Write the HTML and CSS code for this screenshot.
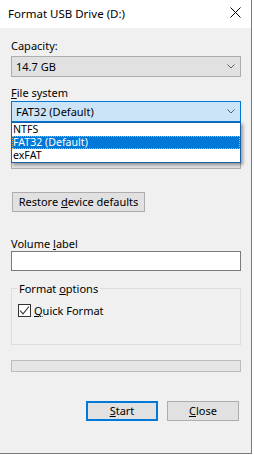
FILE: index.html
```html
<!DOCTYPE HTML>
<html>
<head>
<meta charset="utf-8">
<title>Format USB Drive (D:)</title>
<link rel="stylesheet" href="styles.css">
</head>

<body>
<div class="window">
	<div class="titlebar">
		<span class="title">Format USB Drive (D:)</span>
		<svg class="close-x" width="11" height="11" viewBox="0 0 11 11"><path d="M0.5 0.5L10.5 10.5M10.5 0.5L0.5 10.5" stroke="#000" stroke-width="1" fill="none"/></svg>
	</div>
	<div class="content">
		<div class="label lb-capacity">Capacity:</div>
		<div class="combo combo-capacity">
			<span>14.7 GB</span>
			<svg class="chev" width="8" height="5" viewBox="0 0 8 5"><path d="M0.5 0.5L4 4L7.5 0.5" stroke="#606060" fill="none"/></svg>
		</div>

		<div class="label lb-fs"><u>F</u>ile system</div>
		<div class="combo-wrap">
			<div class="combo combo-open">
				<span>FAT32 (Default)</span>
				<svg class="chev" width="8" height="5" viewBox="0 0 8 5"><path d="M0.5 0.5L4 4L7.5 0.5" stroke="#606060" fill="none"/></svg>
			</div>
			<ul class="dropdown">
				<li>NTFS</li>
				<li class="ac">FAT32 (Default)</li>
				<li>exFAT</li>
			</ul>
		</div>

		<!-- allocation unit size row, covered by the open list -->
		<div class="label lb-alloc"></div>
		<div class="combo combo-alloc"></div>

		<button class="btn btn-restore">Restore <u>d</u>evice defaults</button>

		<div class="label lb-volume">Volume <u>l</u>abel</div>
		<div class="textbox"></div>

		<fieldset class="group">
			<legend>Format <u>o</u>ptions</legend>
			<div class="check-row">
				<span class="checkbox"><svg width="11" height="11" viewBox="0 0 11 11"><path d="M1 5.5L4 8.8L10 1.5" stroke="#333" stroke-width="1.1" fill="none"/></svg></span>
				<span><u>Q</u>uick Format</span>
			</div>
		</fieldset>

		<div class="progress"></div>

		<div class="actions">
			<button class="btn btn-default"><u>S</u>tart</button>
			<button class="btn"><u>C</u>lose</button>
		</div>
	</div>
</div>
</body>
</html>
```

FILE: styles.css
```css
* {margin:0; padding:0; box-sizing:border-box;}
li{list-style:none;}
u{text-decoration:underline; text-underline-offset:1px;}

body{background:#fff; font-family:"Noto Sans","Liberation Sans",sans-serif; font-size:11px; color:#000;}

.window{width:252px; height:454px; background:#f0f0f0; border-right:1px solid #7a7a7a; border-bottom:1px solid #7a7a7a; display:flex; flex-direction:column;}

.titlebar{height:28px; background:#fff; display:flex; align-items:center; justify-content:space-between; padding:0 10px 0 8px;}
.title{line-height:16px; font-size:11.5px;}
.close-x{margin-top:-4px;}

.content{padding:0 10px 0 11px; display:flex; flex-direction:column;}

.label{line-height:15px; height:15px;}
.lb-capacity{margin-top:10px;}
.lb-fs{margin-top:8px;}
.lb-alloc{margin-top:8px;}
.lb-volume{margin-top:24px;}

.combo{height:21px; border:1px solid #adadad; background:#e1e1e1; display:flex; align-items:center; justify-content:space-between; padding:0 5px 0 4px; line-height:15px;}
.combo-capacity{margin-top:3px;}
.combo-alloc{margin-top:3px;}
.combo-open{background:#cce4f7; border-color:#0078d7;}
.chev{margin-top:-1px;}

.combo-wrap{position:relative; margin-top:1px;}
.dropdown{position:absolute; left:0; right:0; top:100%; z-index:5; background:#fff; border:1px solid #1c5fa8; box-shadow:2px 2px 3px rgba(0,0,0,0.35);}
.dropdown li{height:13px; line-height:12px; font-size:10.6px; padding-left:1px; overflow:hidden;}
.dropdown li.ac{background:#0078d7; color:#fff; outline:1px dotted #f7a34a; outline-offset:-1px;}

.btn{font:inherit; color:#000; height:20px; border:1px solid #adadad; background:#e1e1e1; line-height:16px; text-align:center;}
.btn-restore{align-self:flex-start; width:133px; margin:23px 0 0 1px;}

.textbox{height:20px; background:#fff; border:1px solid #7a7a7a;}

.group{margin-top:10px; border:1px solid #dcdcdc; padding:7px 6px 26px 6px;}
.group legend{margin-left:-1px; padding:0 2px; line-height:15px;}
.check-row{height:15px; display:flex; align-items:center; gap:3px;}
.checkbox{width:13px; height:13px; border:1px solid #333; background:#fff; display:flex; align-items:center; justify-content:center;}

.progress{margin-top:15px; height:12px; background:#e6e6e6; border:1px solid #bcbcbc;}

.actions{margin-top:29px; display:flex; justify-content:flex-end; gap:9px; padding-right:2px;}
.actions .btn{width:72px; height:20px;}
.btn-default{border:2px solid #0078d7;}
```
